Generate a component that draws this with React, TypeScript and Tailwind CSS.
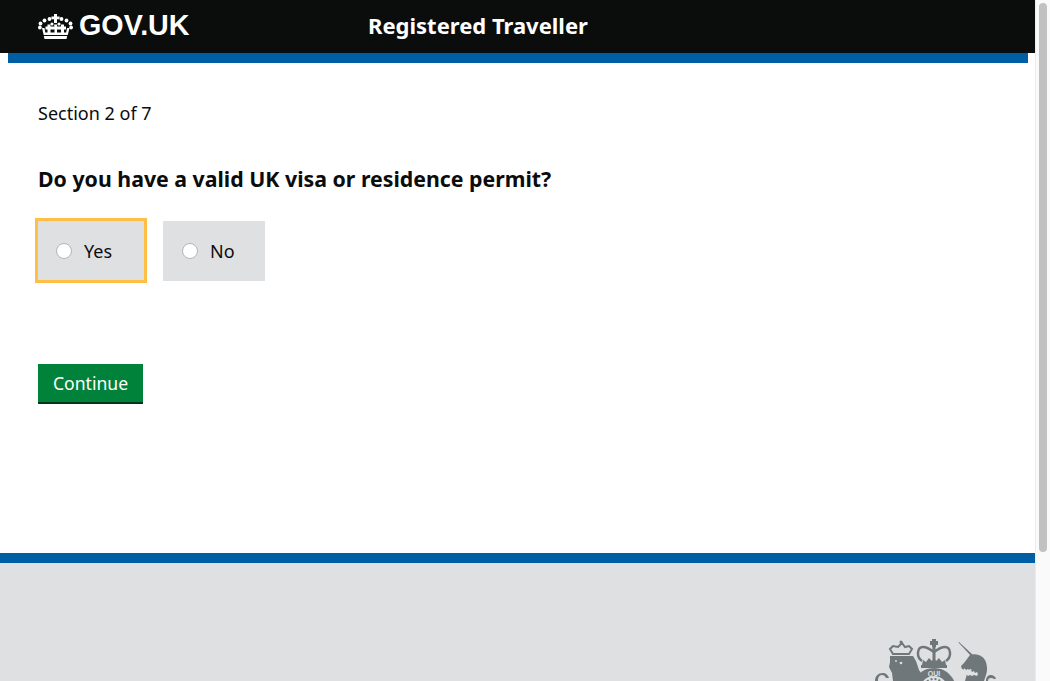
function CrownLogo() {
  const dots = [
    [2.5, 9.5], [6.5, 6.5], [11.5, 5], [23.5, 5], [28.5, 6.5], [32.5, 9.5],
    [1.9, 13.5], [33.1, 13.5],
  ];
  return (
    <svg width="35" height="25" viewBox="0 0 35 25" fill="#fff" aria-hidden="true">
      {dots.map(([cx, cy]) => (
        <circle key={`${cx}-${cy}`} cx={cx} cy={cy} r="1.9" />
      ))}
      <path d="M16 0h3v2.400h2.600v2.800H19V9h-3V5.200h-2.600V2.400H16z" />
      <circle cx="14" cy="10" r="1.600" />
      <circle cx="21" cy="10" r="1.600" />
      <path d="M16 10.500h3v2h2v3h-2v3h4v-3h-2v-3h2v-2h3v2h2v3h-2v3h2.200l.8-4.500h2.500l-1.700 7H5.700L4 14h2.500l.8 4.500H9.500v-3h-2v-3h2v-2h3v2h2v3h-2v3h4v-3h-2v-3h2z" />
      <path d="M5.800 22h23.400l-.7 3H6.500z" />
    </svg>
  );
}

function RoyalCrest() {
  return (
    <svg width="130" height="43" viewBox="0 0 130 43" fill="#6f777b" aria-hidden="true">
      {/* lion */}
      <path d="M20 18h23l3 5 3 9 3 5-3 6H23l-1-8-3-6 1-5z" />
      <path d="M20 11l3 5h16l3-5-3-3-4 1-3-4-4 4-5-1z" fill="none" stroke="#6f777b" strokeWidth="2" />
      <circle cx="31" cy="4" r="1.500" />
      <circle cx="31" cy="25" r="1.300" fill="#dee0e2" />
      <circle cx="26" cy="23" r="0.900" fill="#dee0e2" />
      <path d="M5 43c0-5 3-8 8-8 3 0 5 2 6 5l-3 0c-1-2-2-3-4-3-3 0-4 3-4 6z" />
      {/* royal crown */}
      <path d="M52 23c-6-4-5-14 1-14 4 0 7 2 11 5 4-3 7-5 11-5 6 0 7 10 1 14" fill="none" stroke="#6f777b" strokeWidth="2.500" />
      <rect x="62.500" y="8" width="3" height="15" />
      <path d="M62 1h4v2h2v4h-2v2h-4V7h-2V3h2z" />
      <path d="M52 27l1-5 3 2 3-4 3 3 2-3 2 3 3-3 3 4 3-2 1 5z" />
      <rect x="51" y="27" width="26" height="3" />
      {/* garter ring */}
      <circle cx="64" cy="52" r="18" fill="none" stroke="#6f777b" strokeWidth="8" />
      <text x="64" y="37.500" textAnchor="middle" fontSize="7" fontWeight="700" fill="#dee0e2" fontFamily="'Liberation Sans', sans-serif">QUI</text>
      <circle cx="64" cy="52" r="11" fill="none" stroke="#6f777b" strokeWidth="2" strokeDasharray="2 2" />
      {/* unicorn */}
      <path d="M89 4l14 13-1.500 1.500L88.500 4.500z" />
      <path d="M100 17c6-2 12 0 15 5 2 4 3 10 1 15l-2 6H95l2-7 5-5-6 1-4-1-1-3 3-3z" />
      <path d="M94 30l2 2 2-1 1 2 2-1 1 2 2-1 1 2 2-1 1 2-1 2-3-1-2 1-2-1-2 1-2-2-2 0z" fill="#dee0e2" />
      <path d="M116 43c0-4 2-6 5-6 2 0 4 1 5 4l-2 0c-1-1-2-1-3-1-2 0-3 1-3 3z" />
    </svg>
  );
}

function RadioOption({ label, focused }: { label: string; focused?: boolean }) {
  return (
    <label
      className={
        focused
          ? "flex h-[65px] w-[112px] items-center bg-[#dee0e2] pl-[18px] border-[3px] border-[#ffbf47]"
          : "flex h-[60px] w-[102px] items-center bg-[#dee0e2] pl-[19px]"
      }
    >
      <span className="h-4 w-4 rounded-full border border-[#b5b5b5] bg-white" />
      <span className="ml-[12px] text-lg text-[#0b0c0c]">{label}</span>
    </label>
  );
}

export default function App() {
  return (
    <div className="flex h-[681px] overflow-hidden bg-white font-['Noto_Sans','Open_Sans',sans-serif] text-[#0b0c0c]">
      <div className="flex min-w-0 flex-1 flex-col">
        <header className="flex h-[53px] items-center bg-[#0b0c0c] pl-[38px] text-white">
          <div className="flex w-[330px] items-center">
            <CrownLogo />
            <span className="mb-[2px] ml-[6px] font-['Liberation_Sans',sans-serif] text-[28.700px] font-bold leading-none">GOV.UK</span>
          </div>
          <span className="mb-[2px] text-[22px] font-bold">Registered Traveller</span>
        </header>
        <div className="ml-2 mr-[7px] h-[10px] bg-[#005ea5]" />

        <main className="h-[490px] px-[38px] pt-[38px]">
          <p className="text-lg leading-[24px]">Section 2 of 7</p>
          <h1 className="mt-[39px] text-[21.300px] font-bold leading-[30px]">Do you have a valid UK visa or residence permit?</h1>
          <div className="mt-[24px] -ml-[3px] flex items-center gap-[16px]">
            <RadioOption label="Yes" focused />
            <RadioOption label="No" />
          </div>
          <button
            type="button"
            className="mt-[81px] h-[40px] w-[105px] border-b-2 border-[#003618] bg-[#00823b] text-[17.600px] text-white"
          >
            Continue
          </button>
        </main>

        <footer className="flex flex-1 items-end justify-end overflow-hidden border-t-[10px] border-[#005ea5] bg-[#dee0e2] pr-[35px]">
          <RoyalCrest />
        </footer>
      </div>
      <div className="flex w-[15px] flex-none flex-col border-l border-[#ececec] bg-[#fafafa] pt-[3px] pl-[3px]">
        <div className="h-[549px] w-2 rounded-full bg-[#c1c1c1]" />
      </div>
    </div>
  );
}
